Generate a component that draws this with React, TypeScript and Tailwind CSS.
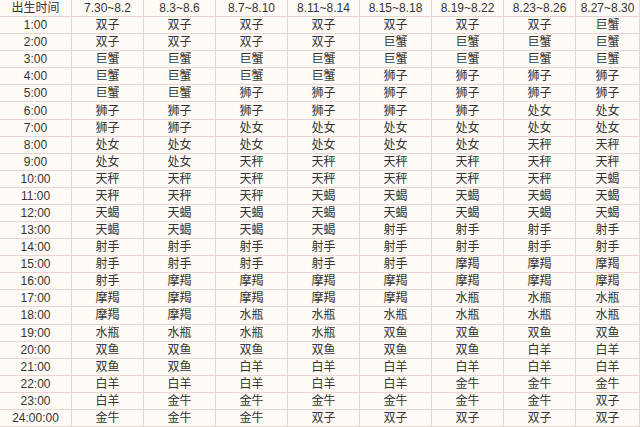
import React from "react";

const headers = [
  "出生时间",
  "7.30~8.2",
  "8.3~8.6",
  "8.7~8.10",
  "8.11~8.14",
  "8.15~8.18",
  "8.19~8.22",
  "8.23~8.26",
  "8.27~8.30",
];

const rows: string[][] = [
  ["1:00", "双子", "双子", "双子", "双子", "双子", "双子", "双子", "巨蟹"],
  ["2:00", "双子", "双子", "双子", "双子", "巨蟹", "巨蟹", "巨蟹", "巨蟹"],
  ["3:00", "巨蟹", "巨蟹", "巨蟹", "巨蟹", "巨蟹", "巨蟹", "巨蟹", "巨蟹"],
  ["4:00", "巨蟹", "巨蟹", "巨蟹", "巨蟹", "狮子", "狮子", "狮子", "狮子"],
  ["5:00", "巨蟹", "巨蟹", "狮子", "狮子", "狮子", "狮子", "狮子", "狮子"],
  ["6:00", "狮子", "狮子", "狮子", "狮子", "狮子", "狮子", "处女", "处女"],
  ["7:00", "狮子", "狮子", "处女", "处女", "处女", "处女", "处女", "处女"],
  ["8:00", "处女", "处女", "处女", "处女", "处女", "处女", "天秤", "天秤"],
  ["9:00", "处女", "处女", "天秤", "天秤", "天秤", "天秤", "天秤", "天秤"],
  ["10:00", "天秤", "天秤", "天秤", "天秤", "天秤", "天秤", "天秤", "天蝎"],
  ["11:00", "天秤", "天秤", "天秤", "天蝎", "天蝎", "天蝎", "天蝎", "天蝎"],
  ["12:00", "天蝎", "天蝎", "天蝎", "天蝎", "天蝎", "天蝎", "天蝎", "天蝎"],
  ["13:00", "天蝎", "天蝎", "天蝎", "天蝎", "射手", "射手", "射手", "射手"],
  ["14:00", "射手", "射手", "射手", "射手", "射手", "射手", "射手", "射手"],
  ["15:00", "射手", "射手", "射手", "射手", "射手", "摩羯", "摩羯", "摩羯"],
  ["16:00", "射手", "摩羯", "摩羯", "摩羯", "摩羯", "摩羯", "摩羯", "摩羯"],
  ["17:00", "摩羯", "摩羯", "摩羯", "摩羯", "摩羯", "水瓶", "水瓶", "水瓶"],
  ["18:00", "摩羯", "摩羯", "水瓶", "水瓶", "水瓶", "水瓶", "水瓶", "水瓶"],
  ["19:00", "水瓶", "水瓶", "水瓶", "水瓶", "双鱼", "双鱼", "双鱼", "双鱼"],
  ["20:00", "双鱼", "双鱼", "双鱼", "双鱼", "双鱼", "双鱼", "白羊", "白羊"],
  ["21:00", "双鱼", "双鱼", "白羊", "白羊", "白羊", "白羊", "白羊", "白羊"],
  ["22:00", "白羊", "白羊", "白羊", "白羊", "白羊", "金牛", "金牛", "金牛"],
  ["23:00", "白羊", "金牛", "金牛", "金牛", "金牛", "金牛", "金牛", "双子"],
  ["24:00:00", "金牛", "金牛", "金牛", "双子", "双子", "双子", "双子", "双子"],
];

export default function App() {
  const all = [headers, ...rows];
  return (
    <div
      className="w-[640px] h-[427px] overflow-hidden bg-[#fffcf7] text-[#333] text-[12px] leading-none"
      style={{ fontFamily: '"Liberation Sans", "Noto Sans CJK SC", sans-serif' }}
    >
      <div className="grid h-full grid-cols-[repeat(8,72px)_64px] grid-rows-[repeat(25,minmax(0,1fr))]">
        {all.map((row, r) =>
          row.map((cell, c) => (
            <div
              key={`${r}-${c}`}
              className="flex items-center justify-center border-r border-b border-[#ecd4d0] whitespace-nowrap"
            >
              {cell}
            </div>
          ))
        )}
      </div>
    </div>
  );
}
